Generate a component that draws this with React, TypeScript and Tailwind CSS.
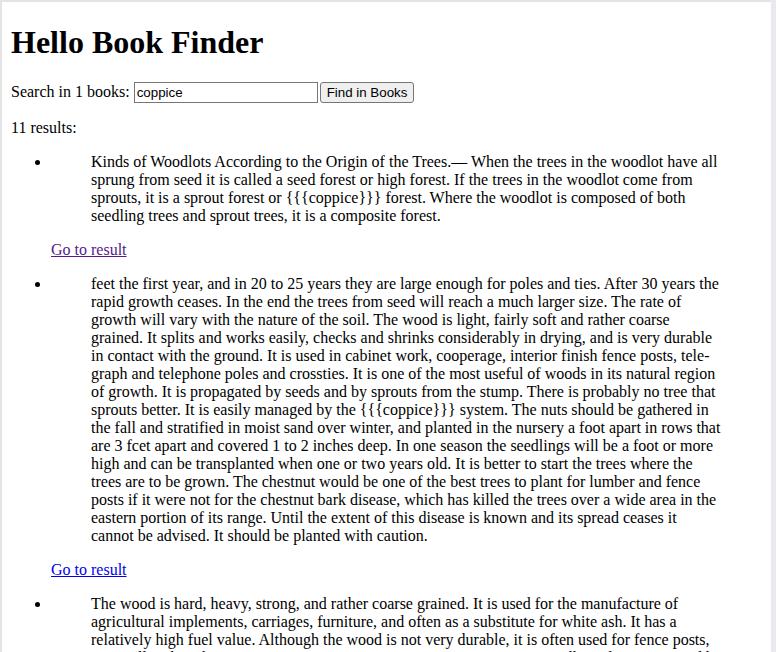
const results = [
  {
    id: 1,
    visited: true,
    text: 'Kinds of Woodlots According to the Origin of the Trees.— When the trees in the woodlot have all sprung from seed it is called a seed forest or high forest. If the trees in the woodlot come from sprouts, it is a sprout forest or {{{coppice}}} forest. Where the woodlot is composed of both seedling trees and sprout trees, it is a composite forest.',
  },
  {
    id: 2,
    visited: false,
    text: 'feet the first year, and in 20 to 25 years they are large enough for poles and ties. After 30 years the rapid growth ceases. In the end the trees from seed will reach a much larger size. The rate of growth will vary with the nature of the soil. The wood is light, fairly soft and rather coarse grained. It splits and works easily, checks and shrinks considerably in drying, and is very durable in contact with the ground. It is used in cabinet work, cooperage, interior finish fence posts, tele-graph and telephone poles and crossties. It is one of the most useful of woods in its natural region of growth. It is propagated by seeds and by sprouts from the stump. There is probably no tree that sprouts better. It is easily managed by the {{{coppice}}} system. The nuts should be gathered in the fall and stratified in moist sand over winter, and planted in the nursery a foot apart in rows that are 3 fcet apart and covered 1 to 2 inches deep. In one season the seedlings will be a foot or more high and can be transplanted when one or two years old. It is better to start the trees where the trees are to be grown. The chestnut would be one of the best trees to plant for lumber and fence posts if it were not for the chestnut bark disease, which has killed the trees over a wide area in the eastern portion of its range. Until the extent of this disease is known and its spread ceases it cannot be advised. It should be planted with caution.',
  },
  {
    id: 3,
    visited: false,
    text: 'The wood is hard, heavy, strong, and rather coarse grained. It is used for the manufacture of agricultural implements, carriages, furniture, and often as a substitute for white ash. It has a relatively high fuel value. Although the wood is not very durable, it is often used for fence posts, especially when the posts are given a preservative treatment. It grows rapidly and is propagated by seeds and by sprouts from the stump, which it produces freely.',
  },
];

export default function App() {
  return (
    <div className="h-screen w-full overflow-hidden flex bg-white">
      <div className="flex-1 h-full overflow-hidden border-l-2 border-t-2 border-[#e4e4e4] font-['Liberation_Serif',serif] text-[16px] leading-[normal] text-black">
        <div className="ml-[9px] mr-[9px] pt-px">
          {/* Title */}
          <h1 className="text-[32px] font-bold leading-[normal] mt-[21px] mb-[21px]">Hello Book Finder</h1>

          {/* Search form */}
          <div className="my-[16px]">
            Search in 1 books:{' '}
            <input
              defaultValue="coppice"
              className="w-[184px] h-[21px] px-[2px] border border-[#767676] font-['Liberation_Sans',sans-serif] text-[13.33px] text-black"
            />
            <button className="ml-[2px] h-[21px] px-[6px] bg-[#efefef] border border-[#767676] rounded-[3px] font-['Liberation_Sans',sans-serif] text-[13.33px] text-black">
              Find in Books
            </button>
          </div>

          <p className="my-[16px]">11 results:</p>

          {/* Results */}
          <ul className="my-[16px] pl-[40px] list-disc">
            {results.map((r) => (
              <li key={r.id}>
                <blockquote className="mx-[40px] my-[16px]">{r.text}</blockquote>
                <p className="my-[16px]">
                  <a href="#" className={r.visited ? 'underline text-[#551a8b]' : 'underline text-[#0000ee]'}>
                    Go to result
                  </a>
                </p>
              </li>
            ))}
          </ul>
        </div>
      </div>
      <div className="w-[5px] h-full bg-[#e9e9ee]" />
    </div>
  );
}
